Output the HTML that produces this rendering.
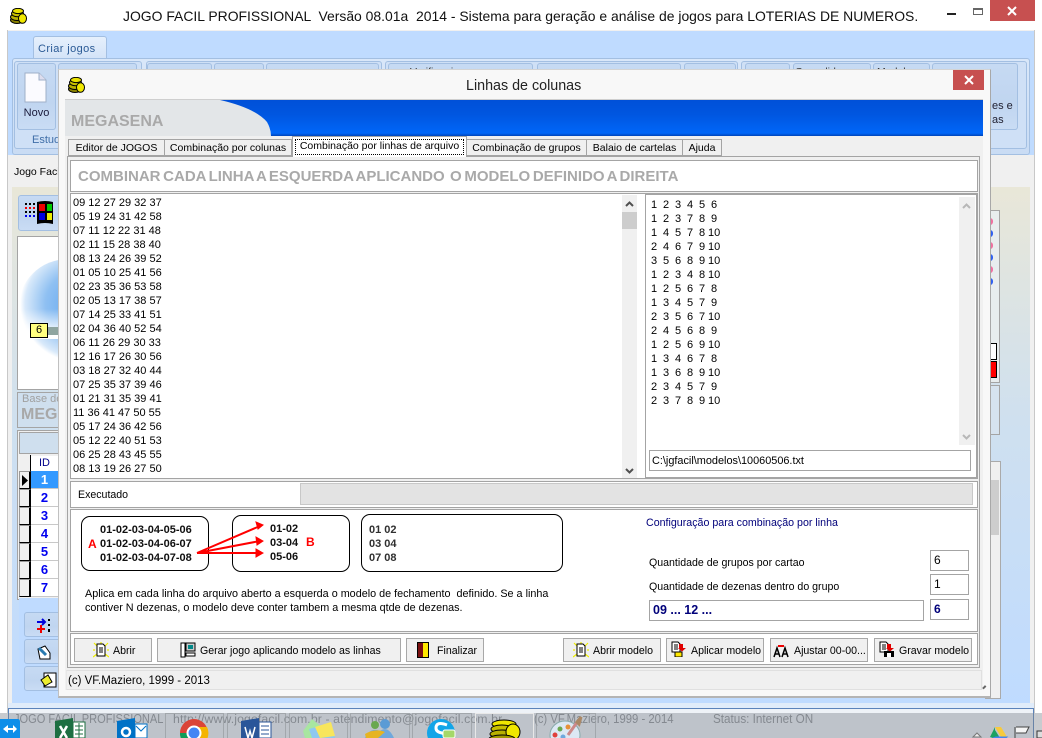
<!DOCTYPE html>
<html><head><meta charset="utf-8"><title>JOGO FACIL PROFISSIONAL</title>
<style>
html,body{margin:0;padding:0}
body{width:1042px;height:738px;overflow:hidden;position:relative;background:#fff;font:11px/14px "Liberation Sans",sans-serif;color:#000}
div,svg{position:absolute;box-sizing:border-box}
.t{white-space:pre}
.c{text-align:center}
.g{border:1px solid #a4a4a4}
.w{background:#fff}
.rb{background:linear-gradient(#c6daf3,#c0d5f0 60%,#c9dcf4);border:1px solid #a3bfe2;border-radius:3px}
.btn{top:638px;height:24px;background:#f0f0f0;border:1px solid #a8a8a8;font-size:10.6px}
.btn .t{top:1px;line-height:23px}
.b{font-weight:bold}
.row{position:absolute;left:648px;white-space:pre;height:14px}
.row span{display:inline-block;width:12px;text-align:center}
.rn{left:31px;width:27px;height:18px;background:#fff;border-bottom:1px solid #c8c8c8;color:#0000f0;font:bold 13px/18px "Liberation Sans",sans-serif;text-align:center}
.ri{left:19px;width:12px;height:18px;background:#f0f0f0;border:1px solid #999;border-right:2px solid #000;border-bottom:1px solid #000}
.tab{top:139px;height:17px;background:#f0f0f0;border:1px solid #a4a4a4;line-height:16px;text-align:center;white-space:pre;font-size:10.5px}
.fr{top:713px;height:25px;border:1px solid rgba(150,155,160,.7);border-bottom:0}
.st{top:712px;color:#8b8e93;font-size:12.3px;transform-origin:0 50%}
</style></head><body>

<svg width="0" height="0" style="left:0;top:0"><defs>
<symbol id="coin" viewBox="0 0 17 16">
<ellipse cx="7" cy="12" rx="6.5" ry="3.5" fill="#8a8200" stroke="#000"/>
<ellipse cx="7" cy="9" rx="6.5" ry="3.5" fill="#b8b000" stroke="#000"/>
<ellipse cx="7.5" cy="5.5" rx="6" ry="3.3" fill="#c8c000" stroke="#000"/>
<ellipse cx="8" cy="3" rx="5.5" ry="2.6" fill="#e8e000" stroke="#000"/>
<ellipse cx="12.5" cy="10.5" rx="4" ry="4.8" fill="#f0e800" stroke="#000"/>
</symbol>
<symbol id="docb" viewBox="0 0 16 16">
<path d="M1 1L4 4M15 1L12 4M0 15L4 12M16 15L12 12M8 0V2M0 8H2M14 8H16" stroke="#eeee00" stroke-width="1.2"/>
<path d="M4 2H10L12 4V14H4Z" fill="#fff" stroke="#000"/><path d="M6 6H10M6 8H10M6 10H10" stroke="#000"/>
</symbol>
<symbol id="doca" viewBox="0 0 16 16">
<path d="M1 1H7L9 3V11H1Z" fill="#fff" stroke="#000"/><path d="M3 4H7M3 6H7M3 8H7" stroke="#000"/>
<path d="M8 3H12V7H15L11 10.500L7 7H8Z" fill="#e00000"/>
</symbol>
</defs></svg>

<!-- outer window -->
<div style="left:7px;top:30px;width:1028px;height:683px;background:#f0f0f0;border-left:1px solid #c8c8c8;border-right:1px solid #c8c8c8"></div>
<div style="left:8px;top:31px;width:1026px;height:124px;background:#bfdbff"></div>
<svg style="left:10px;top:8px" width="17" height="16"><use href="#coin"/></svg>
<div class="t" style="left:123px;top:7px;font-size:13.93px;line-height:18px;color:#111">JOGO FACIL PROFISSIONAL  Versão 08.01a  2014 - Sistema para geração e análise de jogos para LOTERIAS DE NUMEROS.</div>
<div style="left:947px;top:13px;width:9px;height:2px;background:#222"></div>
<div style="left:973px;top:8px;width:10px;height:7px;border:1px solid #666;border-top-width:2px"></div>
<div style="left:990px;top:0;width:45px;height:21px;background:#c75050"></div>
<svg style="left:1006px;top:6px" width="12" height="10"><path d="M2 1L10 9M10 1L2 9" stroke="#fff" stroke-width="2"/></svg>

<!-- ribbon -->
<div style="left:33px;top:36px;width:74px;height:23px;background:linear-gradient(#e6f0fc,#d3e3f8);border:1px solid #a3bfe2;border-bottom:0;border-radius:3px 3px 0 0"></div>
<div class="t" style="left:38px;top:42px;color:#2a5a95;letter-spacing:.4px">Criar jogos</div>
<div style="left:12px;top:58px;width:1018px;height:97px;background:linear-gradient(#d9e7f9,#c9dcf4);border:1px solid #a3bfe2;border-radius:3px"></div>
<div class="rb" style="left:14px;top:61px;width:128px;height:88px;background:#cfe0f6"></div>
<div class="rb" style="left:146px;top:61px;width:236px;height:88px;background:#cfe0f6"></div>
<div class="rb" style="left:385px;top:61px;width:353px;height:88px;background:#cfe0f6"></div>
<div class="rb" style="left:741px;top:61px;width:286px;height:88px;background:#cfe0f6"></div>
<div class="rb" style="left:17px;top:63px;width:39px;height:67px"></div>
<div class="rb" style="left:58px;top:63px;width:79px;height:67px"></div>
<div class="rb" style="left:147px;top:63px;width:65px;height:67px"></div>
<div class="rb" style="left:214px;top:63px;width:50px;height:67px"></div>
<div class="rb" style="left:266px;top:63px;width:113px;height:67px"></div>
<div class="rb" style="left:388px;top:63px;width:145px;height:67px"></div>
<div class="rb" style="left:537px;top:63px;width:144px;height:67px"></div>
<div class="rb" style="left:684px;top:63px;width:52px;height:67px"></div>
<div class="rb" style="left:745px;top:63px;width:45px;height:67px"></div>
<div class="rb" style="left:793px;top:63px;width:78px;height:67px"></div>
<div class="rb" style="left:873px;top:63px;width:57px;height:67px"></div>
<div class="rb" style="left:932px;top:63px;width:86px;height:67px"></div>
<div class="t" style="left:795px;top:65px;height:5px;overflow:hidden;color:#333;font-size:10.5px">Consolidar</div>
<div class="t" style="left:877px;top:65px;height:5px;overflow:hidden;color:#333;font-size:10.5px">Modelos</div>
<div class="t" style="left:410px;top:65px;height:5px;overflow:hidden;color:#333;font-size:10.5px">Verificar jogos</div>
<svg style="left:23px;top:72px" width="24" height="32"><path d="M2 1H16L23 8V30H2Z" fill="#fbfbff" stroke="#9fb0c8"/><path d="M16 1V8H23" fill="#dde" stroke="#9fb0c8"/></svg>
<div class="t c" style="left:17px;top:106px;width:39px;color:#1a1a3a">Novo</div>
<div class="t" style="left:32px;top:133px;color:#3f6ea8;width:26px;overflow:hidden">Estudo</div>
<div class="t" style="left:992px;top:99px;color:#223">es e</div>
<div class="t" style="left:992px;top:113px;color:#223">as</div>
<div class="t" style="left:14px;top:165px;font-size:10.5px">Jogo Facil</div>

<!-- body gradient -->
<div style="left:12px;top:187px;width:1018px;height:516px;background:linear-gradient(#e9e7d8,#cfe0ef 45%,#bfdbff)"></div>
<div style="left:8px;top:703px;width:1026px;height:5px;background:#e0ecfa"></div>

<!-- left column -->
<div class="rb" style="left:18px;top:195px;width:44px;height:36px"></div>
<svg style="left:23px;top:200px" width="32" height="26">
<path d="M2 4h10M2 8h10M2 12h10M2 16h10" stroke="#000" stroke-width="2" stroke-dasharray="2 2"/>
<path d="M2 8h10" stroke="#e00" stroke-width="2" stroke-dasharray="2 2"/><path d="M2 16h10" stroke="#00e" stroke-width="2" stroke-dasharray="2 2"/>
<path d="M14 2Q22 0 30 2V24Q22 22 14 24Z" fill="#000"/>
<rect x="16" y="4" width="6" height="7" fill="#e00"/><rect x="24" y="4" width="5" height="7" fill="#0c0"/><rect x="16" y="13" width="6" height="7" fill="#00d"/><rect x="24" y="13" width="5" height="7" fill="#ee0"/></svg>
<div class="g w" style="left:17px;top:236px;width:44px;height:154px;overflow:hidden">
<div style="left:0;top:22px;width:100px;height:100px;border-radius:50%;background:radial-gradient(circle at 60% 45%,#5fa5ef,#8fc0f2 40%,#d8e9fa 65%,#fff 71%)"></div>
<div style="left:0;top:72px;width:44px;height:30px;background:linear-gradient(rgba(255,255,255,0),#fff 85%)"></div>
<div style="left:26px;top:90px;width:18px;height:8px;background:#8fa5a0"></div>
</div>
<div style="left:30px;top:323px;width:18px;height:15px;background:#ffff80;border:1px solid #000;text-align:center;line-height:13px">6</div>
<div class="g" style="left:17px;top:392px;width:44px;height:36px;background:#cfdfee"></div>
<div class="t" style="left:22px;top:392px;color:#a0a0a0">Base de</div>
<div class="t b" style="left:21px;top:406px;color:#a8a8a8;font-size:16px;line-height:18px">MEGA</div>
<div class="g" style="left:17px;top:430px;width:44px;height:170px;background:#f0f0f0"></div>
<div style="left:19px;top:432px;width:42px;height:22px;background:#cfdfee;border:1px solid #a4a4a4"></div>
<div style="left:19px;top:455px;width:12px;height:16px;background:#f0f0f0;border-right:1px solid #000"></div>
<div class="t c" style="left:31px;top:456px;width:27px;color:#00008a;background:#fff;height:15px">ID</div>
<div class="rn" style="top:471px;background:#3399ff;color:#fff">1</div>
<div class="rn" style="top:489px">2</div><div class="rn" style="top:507px">3</div><div class="rn" style="top:525px">4</div><div class="rn" style="top:543px">5</div><div class="rn" style="top:561px">6</div><div class="rn" style="top:579px">7</div>
<div class="ri" style="top:471px"></div><div class="ri" style="top:489px"></div><div class="ri" style="top:507px"></div><div class="ri" style="top:525px"></div><div class="ri" style="top:543px"></div><div class="ri" style="top:561px"></div><div class="ri" style="top:579px"></div>
<svg style="left:21px;top:474px" width="8" height="13"><path d="M1 1L7 6.500L1 12Z" fill="#000"/></svg>
<div style="left:19px;top:598px;width:42px;height:102px;background:#bfdbff"></div>
<div class="rb" style="left:24px;top:612px;width:38px;height:25px"></div>
<div class="rb" style="left:24px;top:639px;width:38px;height:25px"></div>
<div class="rb" style="left:24px;top:666px;width:38px;height:25px"></div>
<svg style="left:36px;top:618px" width="17" height="15"><path d="M1 4H9M6 1L9 4L6 7" stroke="#00d" stroke-width="2" fill="none"/><path d="M1 11H9M5 7V15" stroke="#e00" stroke-width="2"/><path d="M13 1V3M13 6V8M13 11V14" stroke="#000" stroke-width="2"/></svg>
<svg style="left:37px;top:645px" width="16" height="16"><path d="M1 4L8 1L13 8V14H3Z" fill="#fff" stroke="#000"/><path d="M2 3L9 10" stroke="#2a7ab0" stroke-width="3"/></svg>
<svg style="left:40px;top:672px" width="17" height="16"><rect x="4" y="1" width="12" height="14" fill="#fff" stroke="#000"/><path d="M1 8L8 3L12 10L5 14Z" fill="#eeee30" stroke="#000"/></svg>

<!-- right remains -->
<div class="g w" style="left:985px;top:210px;width:15px;height:173px;background:#e8edee"></div>
<div style="left:990px;top:218px;width:3px;height:7px;border-radius:0 3px 3px 0;background:#f070a0"></div>
<div style="left:990px;top:230px;width:3px;height:7px;border-radius:0 3px 3px 0;background:#3060f0"></div>
<div style="left:990px;top:242px;width:3px;height:7px;border-radius:0 3px 3px 0;background:#f070a0"></div>
<div style="left:990px;top:254px;width:3px;height:7px;border-radius:0 3px 3px 0;background:#3060f0"></div>
<div style="left:990px;top:266px;width:3px;height:7px;border-radius:0 3px 3px 0;background:#f070a0"></div>
<div style="left:990px;top:278px;width:3px;height:7px;border-radius:0 3px 3px 0;background:#3060f0"></div>
<div style="left:985px;top:343px;width:12px;height:17px;background:#fff;border:1px solid #000;border-left:0"></div>
<div style="left:985px;top:361px;width:12px;height:17px;background:#f00;border:1px solid #000;border-left:0"></div>
<div class="g" style="left:985px;top:385px;width:15px;height:50px;background:#d6e3ef"></div>
<div style="left:985px;top:461px;width:16px;height:238px;background:#f0f0f0;border:1px solid #aaa"></div>
<div style="left:991px;top:480px;width:8px;height:55px;background:#cdcdcd"></div>

<!-- dialog -->
<div style="left:58px;top:69px;width:933px;height:629px;background:#f8f8f8;border:1px solid #c0c0c0;border-right:1px solid #a8a8a8;border-bottom:2px solid #b4b4b4;border-top-color:#d4d4d4"></div>
<div style="left:953px;top:70px;width:31px;height:20px;background:#c75050"></div>
<svg style="left:963px;top:75px" width="12" height="10"><path d="M2 1L10 9M10 1L2 9" stroke="#fff" stroke-width="2"/></svg>
<svg style="left:68px;top:77px" width="17" height="16"><use href="#coin"/></svg>
<div class="t" style="left:466px;top:78px;font-size:14.3px;line-height:16px;color:#222">Linhas de colunas</div>
<div style="left:65px;top:99px;width:918px;height:591px;background:#f0f0f0;border-top:1px solid #cfcfcf"></div>

<!-- banner -->
<div style="left:65px;top:100px;width:918px;height:36px;background:linear-gradient(#0050d8,#0056e0 40%,#0066f8 92%,#0044b8);overflow:hidden"></div>
<svg style="left:65px;top:100px" width="208" height="36"><path d="M0 0H155Q190 8 202 22Q206 29 206 36H0Z" fill="#e3e6e8"/></svg>
<div class="t b" style="left:71px;top:113px;font-size:16px;line-height:18px;color:#a9a9a9">MEGASENA</div>

<!-- tabs -->
<div class="g" style="left:67px;top:156px;width:913px;height:512px;background:#f0f0f0"></div>
<div class="tab" style="left:68px;width:97px">Editor de JOGOS</div>
<div class="tab" style="left:164px;width:128px">Combinação por colunas</div>
<div class="tab" style="left:292px;top:136px;height:21px;width:175px;background:#fff;border-bottom:0;line-height:18px"><div style="left:2px;top:2px;width:169px;height:16px;border:1px dotted #000"></div>Combinação por linhas de arquivo</div>
<div class="tab" style="left:466px;width:121px">Combinação de grupos</div>
<div class="tab" style="left:586px;width:97px">Balaio de cartelas</div>
<div class="tab" style="left:682px;width:40px">Ajuda</div>

<!-- header -->
<div class="g w" style="left:70px;top:160px;width:908px;height:32px"></div>
<div class="t b" style="left:78px;top:168px;font-size:15px;line-height:18px;color:#a9a9a9;word-spacing:-1.5px">COMBINAR CADA LINHA A ESQUERDA APLICANDO  O MODELO DEFINIDO A DIREITA</div>

<!-- lists -->
<div class="g w" style="left:70px;top:193px;width:908px;height:286px"></div>
<div class="t" style="left:73px;top:195px;height:282px;width:540px;overflow:hidden;line-height:14px;padding-top:1px">09 12 27 29 32 37
05 19 24 31 42 58
07 11 12 22 31 48
02 11 15 28 38 40
08 13 24 26 39 52
01 05 10 25 41 56
02 23 35 36 53 58
02 05 13 17 38 57
07 14 25 33 41 51
02 04 36 40 52 54
06 11 26 29 30 33
12 16 17 26 30 56
03 18 27 32 40 44
07 25 35 37 39 46
01 21 31 35 39 41
11 36 41 47 50 55
05 17 24 36 42 56
05 12 22 40 51 53
06 25 28 43 45 55
08 13 19 26 27 50
09 20 24 46 51 56</div>
<div style="left:622px;top:195px;width:15px;height:283px;background:#f0f0f0"></div>
<div style="left:622px;top:212px;width:15px;height:17px;background:#cdcdcd"></div>
<svg style="left:625px;top:201px" width="9" height="6"><path d="M1 5L4.500 1.500L8 5" stroke="#505050" stroke-width="2" fill="none"/></svg>
<svg style="left:625px;top:468px" width="9" height="6"><path d="M1 1L4.500 4.500L8 1" stroke="#505050" stroke-width="2" fill="none"/></svg>

<div class="g w" style="left:645px;top:194px;width:332px;height:284px"></div>
<div class="row" style="top:198px"><span>1</span><span>2</span><span>3</span><span>4</span><span>5</span><span>6</span></div>
<div class="row" style="top:212px"><span>1</span><span>2</span><span>3</span><span>7</span><span>8</span><span>9</span></div>
<div class="row" style="top:226px"><span>1</span><span>4</span><span>5</span><span>7</span><span>8</span><span>10</span></div>
<div class="row" style="top:240px"><span>2</span><span>4</span><span>6</span><span>7</span><span>9</span><span>10</span></div>
<div class="row" style="top:254px"><span>3</span><span>5</span><span>6</span><span>8</span><span>9</span><span>10</span></div>
<div class="row" style="top:268px"><span>1</span><span>2</span><span>3</span><span>4</span><span>8</span><span>10</span></div>
<div class="row" style="top:282px"><span>1</span><span>2</span><span>5</span><span>6</span><span>7</span><span>8</span></div>
<div class="row" style="top:296px"><span>1</span><span>3</span><span>4</span><span>5</span><span>7</span><span>9</span></div>
<div class="row" style="top:310px"><span>2</span><span>3</span><span>5</span><span>6</span><span>7</span><span>10</span></div>
<div class="row" style="top:324px"><span>2</span><span>4</span><span>5</span><span>6</span><span>8</span><span>9</span></div>
<div class="row" style="top:338px"><span>1</span><span>2</span><span>5</span><span>6</span><span>9</span><span>10</span></div>
<div class="row" style="top:352px"><span>1</span><span>3</span><span>4</span><span>6</span><span>7</span><span>8</span></div>
<div class="row" style="top:366px"><span>1</span><span>3</span><span>6</span><span>8</span><span>9</span><span>10</span></div>
<div class="row" style="top:380px"><span>2</span><span>3</span><span>4</span><span>5</span><span>7</span><span>9</span></div>
<div class="row" style="top:394px"><span>2</span><span>3</span><span>7</span><span>8</span><span>9</span><span>10</span></div>
<div style="left:959px;top:197px;width:16px;height:248px;background:#f0f0f0"></div>
<svg style="left:962px;top:203px" width="9" height="6"><path d="M1 5L4.500 1.500L8 5" stroke="#b8b8b8" stroke-width="2" fill="none"/></svg>
<svg style="left:962px;top:434px" width="9" height="6"><path d="M1 1L4.500 4.500L8 1" stroke="#b8b8b8" stroke-width="2" fill="none"/></svg>
<div class="g w t" style="left:649px;top:450px;width:322px;height:21px;padding:3px 0 0 2px;font-size:10.9px">C:\jgfacil\modelos\10060506.txt</div>

<!-- executado -->
<div class="g w" style="left:70px;top:481px;width:908px;height:27px"></div>
<div class="t" style="left:78px;top:488px;font-size:10.6px">Executado</div>
<div style="left:300px;top:483px;width:673px;height:22px;background:#e3e3e3;border:1px solid #c8c8c8"></div>

<!-- config -->
<div class="g w" style="left:70px;top:509px;width:908px;height:123px"></div>
<div style="left:81px;top:516px;width:128px;height:55px;border:1px solid #000;border-radius:9px"></div>
<div style="left:232px;top:515px;width:118px;height:57px;border:1px solid #000;border-radius:9px"></div>
<div style="left:361px;top:514px;width:202px;height:58px;border:1px solid #000;border-radius:9px"></div>
<div class="t b" style="left:100px;top:523px;color:#101010">01-02-03-04-05-06</div>
<div class="t b" style="left:100px;top:537px;color:#101010">01-02-03-04-06-07</div>
<div class="t b" style="left:100px;top:551px;color:#101010">01-02-03-04-07-08</div>
<div class="t b" style="left:88px;top:537px;color:#f00;font-size:12px">A</div>
<div class="t b" style="left:270px;top:522px;color:#101010">01-02</div>
<div class="t b" style="left:270px;top:536px;color:#101010">03-04</div>
<div class="t b" style="left:270px;top:550px;color:#101010">05-06</div>
<div class="t b" style="left:306px;top:535px;color:#f00;font-size:12px">B</div>
<div class="t b" style="left:369px;top:523px;color:#303030">01 02</div>
<div class="t b" style="left:369px;top:537px;color:#303030">03 04</div>
<div class="t b" style="left:369px;top:551px;color:#303030">07 08</div>
<svg style="left:190px;top:518px" width="80" height="42"><path d="M7 35L70 8M7 35L70 23M7 35L70 35" stroke="#f00" stroke-width="2"/><path d="M73 7L66 4L68 11ZM73 23L66 19L67 27ZM73 35L66 31L66 39Z" fill="#f00" stroke="#f00"/></svg>
<div class="t" style="left:85px;top:587px;font-size:10.8px">Aplica em cada linha do arquivo aberto a esquerda o modelo de fechamento  definido. Se a linha</div>
<div class="t" style="left:85px;top:601px;font-size:10.8px">contiver N dezenas, o modelo deve conter tambem a mesma qtde de dezenas.</div>
<div class="t" style="left:646px;top:516px;color:#00007a;font-size:10.66px">Configuração para combinação por linha</div>
<div class="t" style="left:649px;top:556px;font-size:10.6px">Quantidade de grupos por cartao</div>
<div class="t" style="left:649px;top:580px;font-size:10.6px">Quantidade de dezenas dentro do grupo</div>
<div class="g w t" style="left:930px;top:550px;width:39px;height:21px;padding:2px 0 0 3px;font-size:12px">6</div>
<div class="g w t" style="left:930px;top:574px;width:39px;height:21px;padding:2px 0 0 3px;font-size:12px">1</div>
<div class="g w t b" style="left:930px;top:599px;width:39px;height:21px;padding:2px 0 0 3px;color:#00007a;font-size:12px">6</div>
<div class="g w t b" style="left:649px;top:600px;width:275px;height:21px;padding:2px 0 0 3px;color:#00007a;font-size:12.500px">09 ... 12 ...</div>

<!-- buttons -->
<div class="g w" style="left:70px;top:633px;width:908px;height:32px"></div>
<div class="btn" style="left:74px;width:78px"><div class="t" style="left:38px">Abrir</div></div>
<svg style="left:93px;top:642px" width="16" height="16"><use href="#docb"/></svg>
<div class="btn" style="left:157px;width:244px"><div class="t" style="left:42px">Gerar jogo aplicando modelo as linhas</div></div>
<svg style="left:180px;top:642px" width="16" height="16"><rect x="1" y="1" width="4" height="14" fill="#fff" stroke="#000"/><rect x="6" y="1" width="9" height="8" fill="#ccc" stroke="#000"/><rect x="8" y="3" width="5" height="4" fill="#088"/><path d="M6 11H15V14H6Z" fill="#fff" stroke="#000"/></svg>
<div class="btn" style="left:406px;width:78px"><div class="t" style="left:30px">Finalizar</div></div>
<svg style="left:417px;top:642px" width="12" height="16"><rect x=".5" y=".5" width="11" height="15" fill="#ffe800" stroke="#000"/><path d="M1 1H6V15H1Z" fill="#7a1010"/></svg>
<div class="btn" style="left:563px;width:98px"><div class="t" style="left:29px">Abrir modelo</div></div>
<svg style="left:573px;top:642px" width="16" height="16"><use href="#docb"/></svg>
<div class="btn" style="left:666px;width:98px"><div class="t" style="left:24px">Aplicar modelo</div></div>
<svg style="left:671px;top:641px" width="16" height="16"><use href="#doca"/><rect x="4" y="11" width="7" height="5" fill="#ffe800" stroke="#000"/></svg>
<div class="btn" style="left:770px;width:98px"><div class="t" style="left:23px">Ajustar 00-00...</div></div>
<svg style="left:773px;top:643px" width="18" height="15"><path d="M1 14L4 5L7 14M2.500 11H6M9 14L12 5L15 14M10.500 11H14" stroke="#000" stroke-width="1.500" fill="none"/><path d="M5 3H11" stroke="#e00" stroke-width="2"/></svg>
<div class="btn" style="left:874px;width:98px"><div class="t" style="left:24px">Gravar modelo</div></div>
<svg style="left:879px;top:641px" width="16" height="16"><use href="#doca"/><rect x="5" y="10" width="10" height="6" fill="#000"/><rect x="8" y="12" width="4" height="4" fill="#fff"/></svg>

<!-- status -->
<div style="left:66px;top:670px;width:916px;height:20px;border:1px solid #e0e0e0;border-left-color:#e8e8e8;background:#f0f0f0"></div>
<div class="t" style="left:68px;top:674px;font-size:11.5px">(c) VF.Maziero, 1999 - 2013</div>
<div style="left:983px;top:686px;width:4px;height:4px;border-left:2px solid #666;transform:rotate(45deg)"></div>

<!-- bottom status + taskbar -->
<div style="left:8px;top:708px;width:1026px;height:30px;background:#eef2f7;border-top:1px solid #5b83bb;border-left:1px solid #5b83bb;border-right:1px solid #5b83bb"></div>
<div class="t st" style="left:14px;font-size:13px;transform:scaleX(.85)">JOGO FACIL PROFISSIONAL</div>
<div class="t st" style="left:173px;letter-spacing:.1px">http://www.jogofacil.com.br - atendimento@jogofacil.com.br</div>
<div class="t st" style="left:534px;font-size:13px;transform:scaleX(.87)">(c) VF.Maziero, 1999 - 2014</div>
<div class="t st" style="left:713px;font-size:13px;transform:scaleX(.9)">Status: Internet ON</div>
<div style="left:0;top:713px;width:1042px;height:25px;background:rgba(125,130,140,.42)"></div>
<div class="fr" style="left:165px;width:59px"></div>
<div class="fr" style="left:227px;width:59px"></div>
<div class="fr" style="left:289px;width:59px"></div>
<div class="fr" style="left:350px;width:60px"></div>
<div class="fr" style="left:412px;width:60px"></div>
<div class="fr" style="left:475px;width:59px;border-color:#e8e8e8"></div>
<div class="fr" style="left:536px;width:60px"></div>

<!-- task icons -->
<svg style="left:0;top:713px" width="1042" height="25">
<path d="M0 6H18Q20 6 20 9V25H0Z" fill="#0e8ee9"/><path d="M3 16L8 12V15H13V12L17 16L13 20V17H8V20Z" fill="#fff"/>
<path d="M55 8L73 5V25H55Z" fill="#1d6f42"/><rect x="73" y="9" width="12" height="16" fill="#fff" stroke="#1d6f42"/><path d="M75 13H83M75 17H83M75 21H83M79 10V25" stroke="#1d6f42"/><path d="M60 13L67 25M67 13L60 25" stroke="#fff" stroke-width="2.500"/>
<path d="M117 8L135 5V25H117Z" fill="#0072c6"/><rect x="135" y="11" width="12" height="14" fill="#fff" stroke="#0072c6"/><path d="M136 13L141 18L146 13" stroke="#0072c6" fill="none"/><circle cx="126" cy="19" r="4" fill="none" stroke="#fff" stroke-width="2.500"/>
<circle cx="194" cy="20" r="14" fill="#db4437"/><path d="M180 20A14 14 0 0 0 200 33L194 20Z" fill="#0f9d58"/><path d="M194 20L200 33A14 14 0 0 0 207 14H194Z" fill="#f4b400"/><circle cx="194" cy="20" r="6.500" fill="#4285f4" stroke="#fff" stroke-width="2"/>
<path d="M241 8L259 5V25H241Z" fill="#2a5699"/><rect x="259" y="9" width="12" height="16" fill="#fff" stroke="#2a5699"/><path d="M261 13H269M261 17H269M261 21H269" stroke="#2a5699"/><path d="M245 14L248 25L250 18L252 25L255 14" stroke="#fff" fill="none" stroke-width="1.500"/>
<path d="M303 18L312 6L324 16L316 25H305Z" fill="#a8e6a0"/><path d="M309 16L331 10L335 25H312Z" fill="#8ec8f0"/><path d="M315 14L331 9L335 23L320 25Z" fill="#f8e65c"/>
<circle cx="375" cy="12" r="4" fill="#6aa84f"/><circle cx="385" cy="11" r="5" fill="#5b9bd5"/><path d="M365 25Q370 14 380 18Q388 12 394 25Z" fill="#6fa8dc"/><path d="M365 21Q375 15 385 19L378 25H366Z" fill="#e6b422"/>
<circle cx="441" cy="20" r="14" fill="#12a5e8"/><path d="M447 12Q436 8 436 15Q436 19 442 20Q447 22 447 25" stroke="#fff" stroke-width="3" fill="none"/><rect x="443" y="17" width="12" height="8" rx="2" fill="#a5d86a" stroke="#fff"/>
<g transform="translate(489,5)" stroke="#000"><ellipse cx="15" cy="6" rx="12" ry="4" fill="#f0e800"/><ellipse cx="13" cy="11" rx="11" ry="4" fill="#c8c000"/><ellipse cx="13" cy="16" rx="12" ry="4" fill="#b8b000"/><ellipse cx="24" cy="14" rx="7" ry="8" fill="#f0e800"/><ellipse cx="13" cy="21" rx="13" ry="4" fill="#a09800"/></g>
<ellipse cx="565" cy="22" rx="15" ry="14" fill="#dce8f4" stroke="#8aa"/><circle cx="560" cy="16" r="2.500" fill="#6aa84f"/><circle cx="568" cy="14" r="2.500" fill="#e69138"/><circle cx="555" cy="22" r="2.500" fill="#e0403c"/><circle cx="563" cy="24" r="2.500" fill="#6fa8dc"/><path d="M568 22L578 8" stroke="#c88" stroke-width="3"/><path d="M577 9L581 4L579 11Z" fill="#a86" stroke="#a86" stroke-width="3"/>
<path d="M973 24L977 20L981 24Z" fill="#eee" stroke="#777"/>
<path d="M995 14H1001L1007 24H1001Z" fill="#f7ca3c"/><path d="M995 14L990 24L993 25H1000L995 17Z" fill="#1ba261"/><path d="M993 25H1006L1007 24H996Z" fill="#4285f4" stroke="#4285f4"/>
<path d="M1015 14V25M1016 14H1029L1026 20H1016" stroke="#444" fill="#f4f4f4"/>
<rect x="1037" y="18" width="6" height="7" fill="#ddd" stroke="#333"/>
</svg>
</body></html>
